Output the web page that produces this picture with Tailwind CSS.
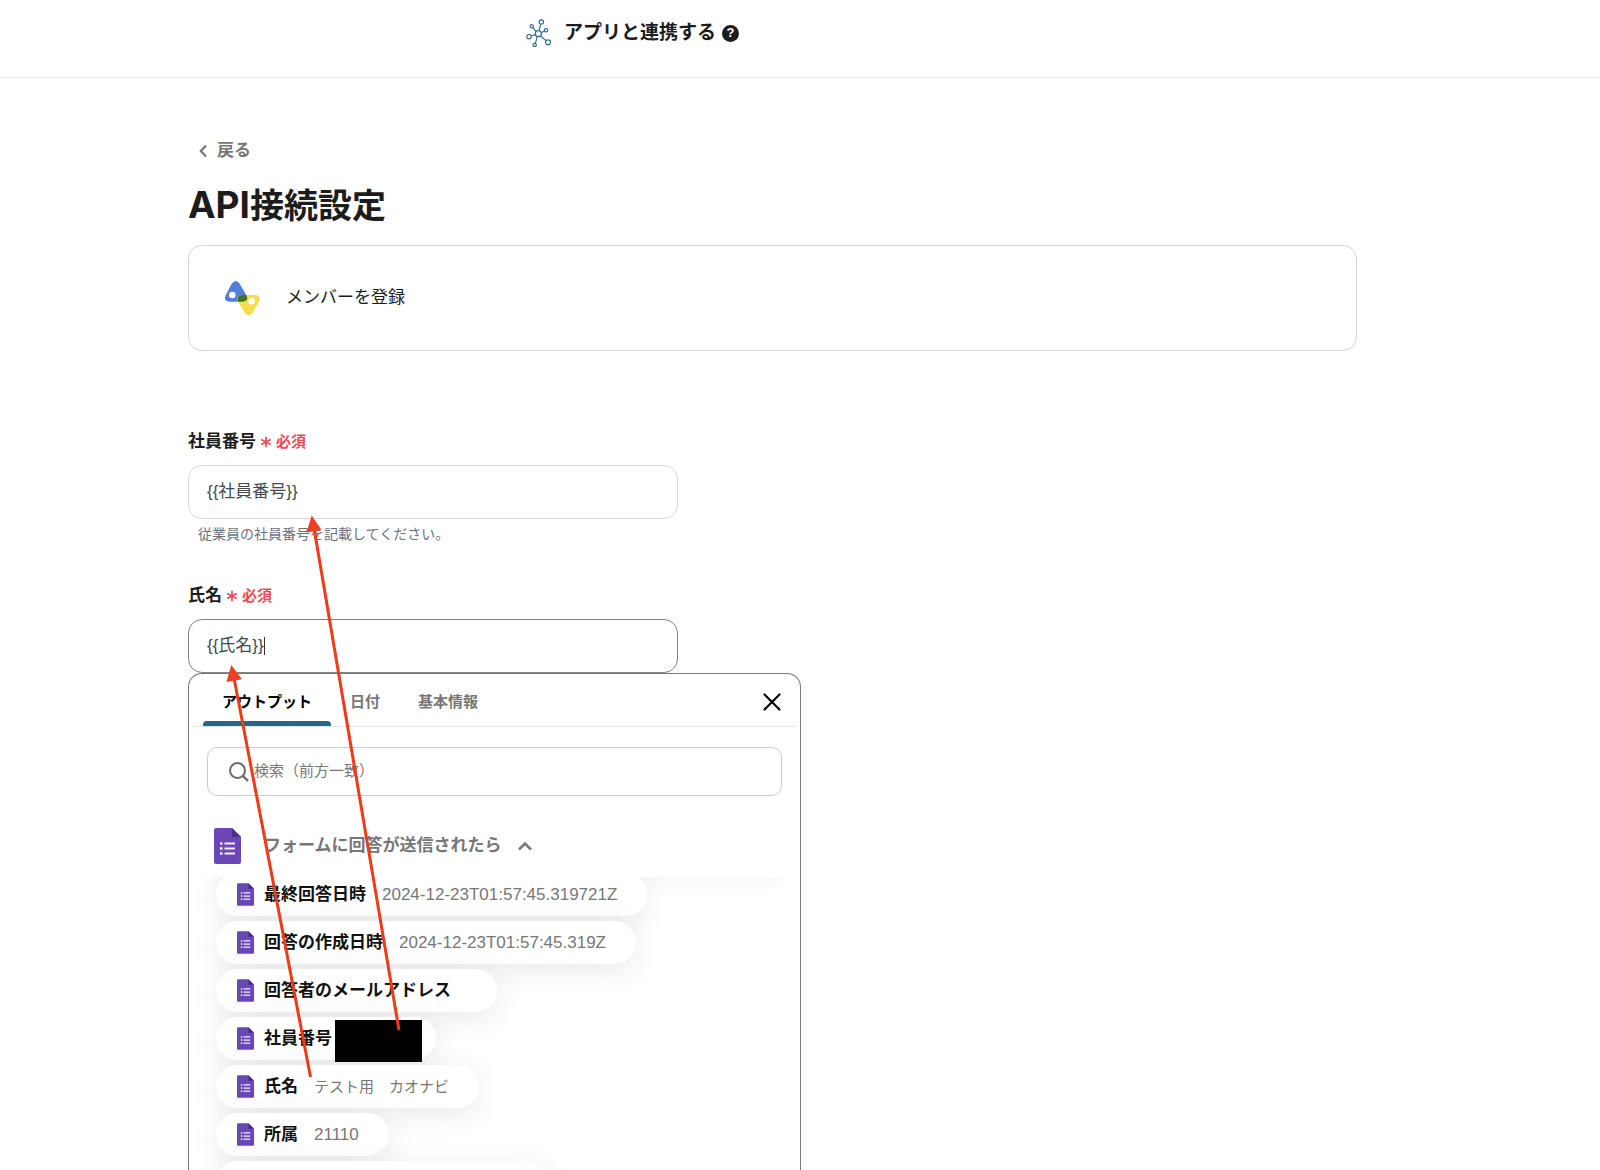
<!DOCTYPE html>
<html lang="ja">
<head>
<meta charset="utf-8">
<title>API接続設定</title>
<script src="https://cdn.jsdelivr.net/npm/@tailwindcss/browser@4"></script>
</head>
<body class="relative h-screen overflow-hidden bg-white font-['Liberation_Sans','Noto_Sans_CJK_JP',sans-serif] text-[17px] leading-6 text-[#1c1c1c]">
<svg class="hidden" aria-hidden="true">
  <symbol id="form" viewBox="0 0 27 36">
    <path d="M2 0H18L27 9V34a2 2 0 0 1-2 2H2a2 2 0 0 1-2-2V2a2 2 0 0 1 2-2z" fill="#6b46b4"/>
    <path d="M18 0L27 9H18z" fill="#4a2f86"/>
    <path d="M10.500 15.500H21M10.500 20.500H21M10.500 25.500H21" stroke="#f3eefb" stroke-width="2"/>
    <path d="M6 15.500H8.500M6 20.500H8.500M6 25.500H8.500" stroke="#f3eefb" stroke-width="2.300"/>
  </symbol>
</svg>

<header class="flex h-[78px] items-center border-b border-[#e6e6e6] pb-[11px] pl-[526px]">
  <svg class="h-7 w-[26px]" viewBox="78 56 78 84" fill="none" stroke="#2f6d8c" stroke-width="3.500">
    <circle cx="115" cy="100" r="9"/><circle cx="124" cy="65" r="6.500"/><circle cx="95" cy="78" r="5"/><circle cx="138" cy="90" r="5"/><circle cx="87" cy="109" r="6.500"/><circle cx="104" cy="134" r="5"/><circle cx="144" cy="126" r="7.500"/>
    <path d="M117 91L122 72M108 94L99 82M124 97L133 92M106 103L94 107M112 109L106 129M122 107L138 121"/>
  </svg>
  <p class="ml-3 text-[19px] font-bold">アプリと連携する</p>
  <button type="button" aria-label="ヘルプ" class="ml-[6px] flex size-[17px] items-center justify-center rounded-full bg-[#1c1c1c] text-[13px] leading-4 font-bold text-white">?</button>
</header>

<main class="pt-[61px] pr-[243px] pl-[188px]">
  <a href="#" class="flex w-fit items-center gap-[10px] pl-[11px] font-bold text-[#777]">
    <svg class="h-[14px] w-2" viewBox="0 0 8 14" fill="none" stroke="currentColor" stroke-width="2.200"><path d="M7 1.500L1.800 7L7 12.500"/></svg>
    戻る
  </a>
  <h1 class="mt-[18px] text-[34px] leading-12 font-bold"><span class="font-['Inter'] text-[37px]">API</span>接続設定</h1>

  <section class="mt-[15px] flex h-[106px] items-center gap-[26px] rounded-[14px] border border-[#d4d4d4] pl-9">
    <svg class="size-[35px]" viewBox="0 0 105 105">
      <path d="M20 8Q32-8 44 8L65 44Q72 62 54 62H12Q-5 60 2 43z" fill="#4f7fdb"/>
      <path d="M50 42H92Q108 44 103 60L82 96Q72 110 60 97L38 60Q32 44 50 42z" fill="#f8dc4c"/>
      <path d="M50 42H64Q72 60 54 62H39Q33 44 50 42z" fill="#41761f"/>
      <circle cx="22" cy="42" r="10" fill="#fff"/><circle cx="80" cy="61" r="10" fill="#fff"/>
    </svg>
    <p>メンバーを登録</p>
  </section>

  <form>
    <div class="mt-[79px] flex items-center gap-1">
      <label for="number" class="font-bold">社員番号</label>
      <span class="flex items-center gap-1 text-[15px] font-bold text-[#ec4a55]">
        <svg class="size-3" viewBox="0 0 12 12" stroke="currentColor" stroke-width="1.700"><path d="M6 .8V11.200M1.200 3.400L10.800 8.600M10.800 3.400L1.200 8.600"/></svg>必須
      </span>
    </div>
    <input id="number" type="text" value="{{社員番号}}" class="mt-[11px] block h-[54px] w-[490px] rounded-[14px] border border-[#d5d8de] px-[18px] pb-[6px] text-[#434a54] outline-none">
    <p class="mt-[5px] pl-[10px] text-[14px] leading-5 text-[#6b7280]">従業員の社員番号を記載してください。</p>

    <div class="mt-10 flex items-center gap-1">
      <label for="name" class="font-bold">氏名</label>
      <span class="flex items-center gap-1 text-[15px] font-bold text-[#ec4a55]">
        <svg class="size-3" viewBox="0 0 12 12" stroke="currentColor" stroke-width="1.700"><path d="M6 .8V11.200M1.200 3.400L10.800 8.600M10.800 3.400L1.200 8.600"/></svg>必須
      </span>
    </div>
    <div class="relative mt-[11px] w-[490px]">
      <input id="name" type="text" value="{{氏名}}" class="block h-[54px] w-full rounded-[14px] border border-[#858585] px-[18px] pb-[6px] text-[#434a54] outline-none">
      <span class="absolute top-[18px] left-[76px] h-[18px] w-px bg-[#333]"></span>
    </div>

    <div class="w-[613px] rounded-t-[14px] border border-b-0 border-[#777] pb-10">
      <div class="mx-1 flex h-[53px] items-center justify-between border-b border-[#e6e6e6] pr-[15px] pl-[10px]">
        <div role="tablist" class="flex h-full text-[15px] font-bold text-[#777]">
          <button type="button" role="tab" aria-selected="true" class="relative px-[19px] pt-1 text-black">アウトプット<span class="absolute inset-x-0 bottom-0 h-[5px] rounded-t-[4px] bg-[#216a83]"></span></button>
          <button type="button" role="tab" class="px-[19px] pt-1">日付</button>
          <button type="button" role="tab" class="px-[19px] pt-1">基本情報</button>
        </div>
        <button type="button" aria-label="閉じる" class="pt-1"><svg class="size-[18px]" viewBox="0 0 18 18" stroke="#000" stroke-width="2.200" stroke-linecap="round"><path d="M1.500 1.500L16.500 16.500M16.500 1.500L1.500 16.500"/></svg></button>
      </div>

      <div class="mx-[18px] mt-5 flex h-[49px] items-center gap-[5px] rounded-[10px] border border-[#ccc] pl-[21px]">
        <svg class="size-5" viewBox="0 0 20 20" fill="none" stroke="#6b6b6b" stroke-width="2"><circle cx="8.500" cy="8.500" r="7.500"/><path d="M13.800 13.800L19 19" stroke-width="2.400"/></svg>
        <input type="search" aria-label="検索" placeholder="検索（前方一致）" class="h-10 grow pb-[2px] text-[15px] outline-none placeholder:text-[#777]">
      </div>

      <div class="mt-[19px] mr-2 ml-[9px] flex h-[62px] items-center bg-white pl-4 shadow-[0_14px_20px_-12px_rgba(0,0,0,0.05)]">
        <svg class="h-9 w-[27px]"><use href="#form"/></svg>
        <button type="button" class="ml-[23px] flex items-center gap-4 font-bold text-[#777]">フォームに回答が送信されたら
          <svg class="h-[10px] w-[14px]" viewBox="0 0 14 10" fill="none" stroke="currentColor" stroke-width="2.500"><path d="M1 8.500L7 2.500L13 8.500"/></svg>
        </button>
      </div>

      <div class="overflow-hidden pb-10">
        <ul class="-mt-1 flex flex-col items-start gap-[5px] pl-[27px] text-[17px] text-[#777]">
          <li class="flex h-[43px] items-center rounded-full bg-white pr-[30px] pl-[21px] shadow-[0_6px_30px_rgba(0,0,0,0.09)]"><svg class="h-[23px] w-[17px]"><use href="#form"/></svg><b class="ml-[10px] text-[#111]">最終回答日時</b><span class="ml-4">2024-12-23T01:57:45.319721Z</span></li>
          <li class="flex h-[43px] items-center rounded-full bg-white pr-[30px] pl-[21px] shadow-[0_6px_30px_rgba(0,0,0,0.09)]"><svg class="h-[23px] w-[17px]"><use href="#form"/></svg><b class="ml-[10px] text-[#111]">回答の作成日時</b><span class="ml-4">2024-12-23T01:57:45.319Z</span></li>
          <li class="flex h-[43px] items-center rounded-full bg-white pr-[30px] pl-[21px] shadow-[0_6px_30px_rgba(0,0,0,0.09)]"><svg class="h-[23px] w-[17px]"><use href="#form"/></svg><b class="mr-4 ml-[10px] text-[#111]">回答者のメールアドレス</b></li>
          <li class="flex h-[43px] items-center rounded-full bg-white pr-[14px] pl-[21px] shadow-[0_6px_30px_rgba(0,0,0,0.09)]"><svg class="h-[23px] w-[17px]"><use href="#form"/></svg><b class="ml-[10px] text-[#111]">社員番号</b><span class="relative ml-[3px] h-[43px] w-[87px]"><span class="absolute inset-x-0 top-[3px] z-10 h-[42px] bg-black"></span></span></li>
          <li class="flex h-[43px] items-center rounded-full bg-white pr-[30px] pl-[21px] shadow-[0_6px_30px_rgba(0,0,0,0.09)]"><svg class="h-[23px] w-[17px]"><use href="#form"/></svg><b class="ml-[10px] text-[#111]">氏名</b><span class="ml-4 text-[15px]">テスト用　カオナビ</span></li>
          <li class="flex h-[43px] items-center rounded-full bg-white pr-[30px] pl-[21px] shadow-[0_6px_30px_rgba(0,0,0,0.09)]"><svg class="h-[23px] w-[17px]"><use href="#form"/></svg><b class="ml-[10px] text-[#111]">所属</b><span class="ml-4">21110</span></li>
          <li class="h-[43px] w-[332px] rounded-full bg-white shadow-[0_6px_30px_rgba(0,0,0,0.09)]"></li>
        </ul>
      </div>
    </div>
  </form>
</main>

<!-- annotation arrows from the output items to the fields they fill -->
<svg class="pointer-events-none absolute top-0 left-0 z-20 h-[1170px] w-[1600px]" viewBox="0 0 1600 1170" stroke="#ee3a16" stroke-width="3" fill="#ee3f22" aria-hidden="true">
  <path d="M399 1030L314 528M310.500 1077L234 678"/>
  <path d="M311.700 515.500L306.500 532.500L321.500 530zM231.300 665L226.500 682L242 679.300z" stroke="none"/>
</svg>
</body>
</html>
